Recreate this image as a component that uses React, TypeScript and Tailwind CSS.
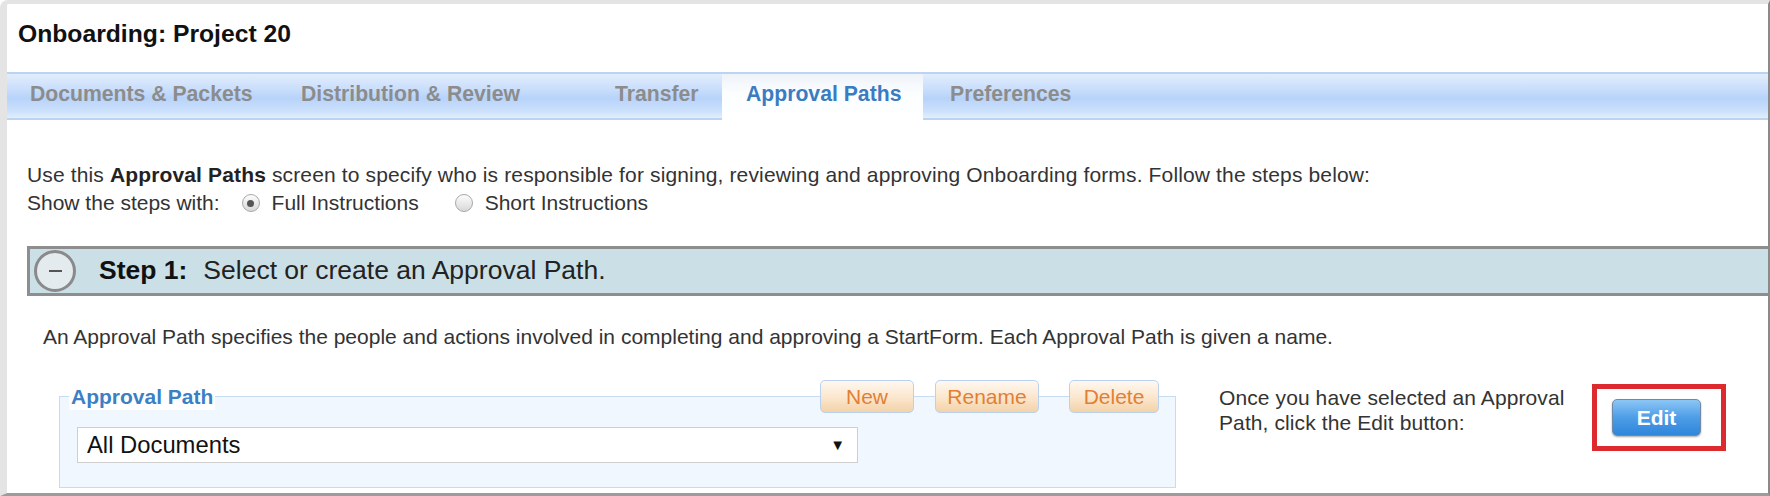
import { useState } from 'react'

const tabs = [
  { label: 'Documents & Packets', cls: 'w-[269px] pl-[23px]' },
  { label: 'Distribution & Review', cls: 'w-[268px] pl-[25px]' },
  { label: 'Transfer', cls: 'w-[178px] pl-[71px]' },
  { label: 'Approval Paths', cls: 'w-[201px] pl-[24px]' },
  { label: 'Preferences', cls: 'w-[200px] pl-[27px]' },
]

function Radio({ checked, onClick }: { checked: boolean; onClick: () => void }) {
  return (
    <span
      onClick={onClick}
      className="flex h-[18px] w-[18px] flex-none cursor-pointer items-center justify-center rounded-full border border-[#a8a8a8] bg-[linear-gradient(#fdfdfd,#d8d8d8)]"
    >
      {checked && <span className="h-[7px] w-[7px] rounded-full bg-[#555]" />}
    </span>
  )
}

function PeachButton({ label, w }: { label: string; w: string }) {
  return (
    <button
      className={`${w} h-[33px] rounded-[5px] border border-[#b9d1ef] bg-[linear-gradient(#fff8f0,#fbe6cc_55%,#f4d2a8)] text-[21px] leading-none text-[#e27f34]`}
    >
      {label}
    </button>
  )
}

export default function App() {
  const [active, setActive] = useState('Approval Paths')
  const [mode, setMode] = useState<'full' | 'short'>('full')

  return (
    <div className="h-[496px] w-[1770px] overflow-hidden bg-white font-['Liberation_Sans',Arial,sans-serif] text-[#333]">
      <div className="flex h-full flex-col rounded-tl-[8px] border-t-4 border-r-2 border-b-[3px] border-l-[7px] border-t-[#e4e4e4] border-r-[#8a8a8a] border-b-[#9c9c9c] border-l-[#e4e4e4]">
        {/* title */}
        <div className="h-[68px] flex-none pl-[11px] pt-[14px]">
          <h1 className="text-[24.7px] font-bold leading-[32px] text-[#111]">Onboarding: Project 20</h1>
        </div>

        {/* tab bar */}
        <div className="flex h-[48px] flex-none border-t-2 border-b-2 border-[#bcd4f4] bg-[linear-gradient(#e2edfd,#c9defb_35%,#b7d3fa_55%,#cde1fc_85%,#e3eefd)]">
          {tabs.map(t => {
            const on = t.label === active
            return (
              <button
                key={t.label}
                onClick={() => setActive(t.label)}
                className={`${t.cls} -mb-[2px] flex items-center pb-[7px] text-left text-[21.2px] font-bold ${
                  on ? 'bg-[linear-gradient(#eef3f9,#fbfdff_40%,#ffffff)] text-[#3a7cc2]' : 'text-[#8c8c8c]'
                }`}
              >
                {t.label}
              </button>
            )
          })}
        </div>

        {/* body */}
        <div className="flex-1 pl-[20px] text-[21px]">
          <p className="mt-[41px] leading-[28px] tracking-[0.14px]">
            Use this <b className="text-[#222]">Approval Paths</b> screen to specify who is responsible for signing, reviewing and approving Onboarding forms. Follow the steps below:
          </p>
          <div className="flex h-[28px] items-center">
            <span>Show the steps with:</span>
            <span className="ml-[22px]">
              <Radio checked={mode === 'full'} onClick={() => setMode('full')} />
            </span>
            <span className="ml-[12px]">Full Instructions</span>
            <span className="ml-[36px]">
              <Radio checked={mode === 'short'} onClick={() => setMode('short')} />
            </span>
            <span className="ml-[12px]">Short Instructions</span>
          </div>

          {/* step header */}
          <div className="mt-[29px] flex h-[50px] items-center border-y-[3px] border-l-[3px] border-[#8e8e8e] bg-[#cbdfe6]">
            <span className="ml-[4px] flex h-[42px] w-[42px] flex-none items-center justify-center rounded-full border-[3px] border-[#8a8a8a] bg-[#e3ebee]">
              <span className="h-[2px] w-[13px] bg-[#555]" />
            </span>
            <span className="ml-[23px] text-[26.5px] font-bold text-[#111]">Step 1:</span>
            <span className="ml-[16px] text-[26.5px] text-[#222]">Select or create an Approval Path.</span>
          </div>

          <div className="pl-[16px]">
            <p className="mt-[27px] leading-[28px]">
              An Approval Path specifies the people and actions involved in completing and approving a StartForm. Each Approval Path is given a name.
            </p>

            <div className="mt-[33px] flex items-start">
              {/* approval path group */}
              <div className="ml-[16px] mt-[12px] w-[1117px] border border-[#c6dcf5] bg-[#f1f7fe] pb-[24px]">
                <div className="-mt-[17px] flex h-[33px] items-center">
                  <span className="ml-[9px] bg-white px-[2px] text-[21px] font-bold leading-[26px] text-[#3d7fc5]">Approval Path</span>
                  <div className="flex-1" />
                  <PeachButton label="New" w="w-[94px]" />
                  <span className="ml-[21px]">
                    <PeachButton label="Rename" w="w-[104px]" />
                  </span>
                  <span className="ml-[30px] mr-[16px]">
                    <PeachButton label="Delete" w="w-[90px]" />
                  </span>
                </div>
                <div className="ml-[17px] mt-[14px] flex h-[36px] w-[781px] items-center justify-between border border-[#cfcfcf] bg-white pl-[9px] pr-[12px] text-[23.8px] text-[#111]">
                  <span>All Documents</span>
                  <span className="text-[15px]">▼</span>
                </div>
              </div>

              <p className="ml-[43px] mt-[1px] w-[365px] leading-[25px] tracking-[0.1px]">
                Once you have selected an Approval Path, click the Edit button:
              </p>

              <div className="ml-[8px] border-[5px] border-[#dc2a2e] bg-white py-[10px] pl-[15px] pr-[20px]">
                <button className="h-[37px] w-[89px] rounded-[5px] border border-[#6f8aa6] bg-[linear-gradient(#8cc6f5,#4e9de6_50%,#2f86db)] text-[21px] font-bold text-white shadow-[0_1px_2px_rgba(0,0,0,0.35)]">
                  Edit
                </button>
              </div>
            </div>
          </div>
        </div>
      </div>
    </div>
  )
}
